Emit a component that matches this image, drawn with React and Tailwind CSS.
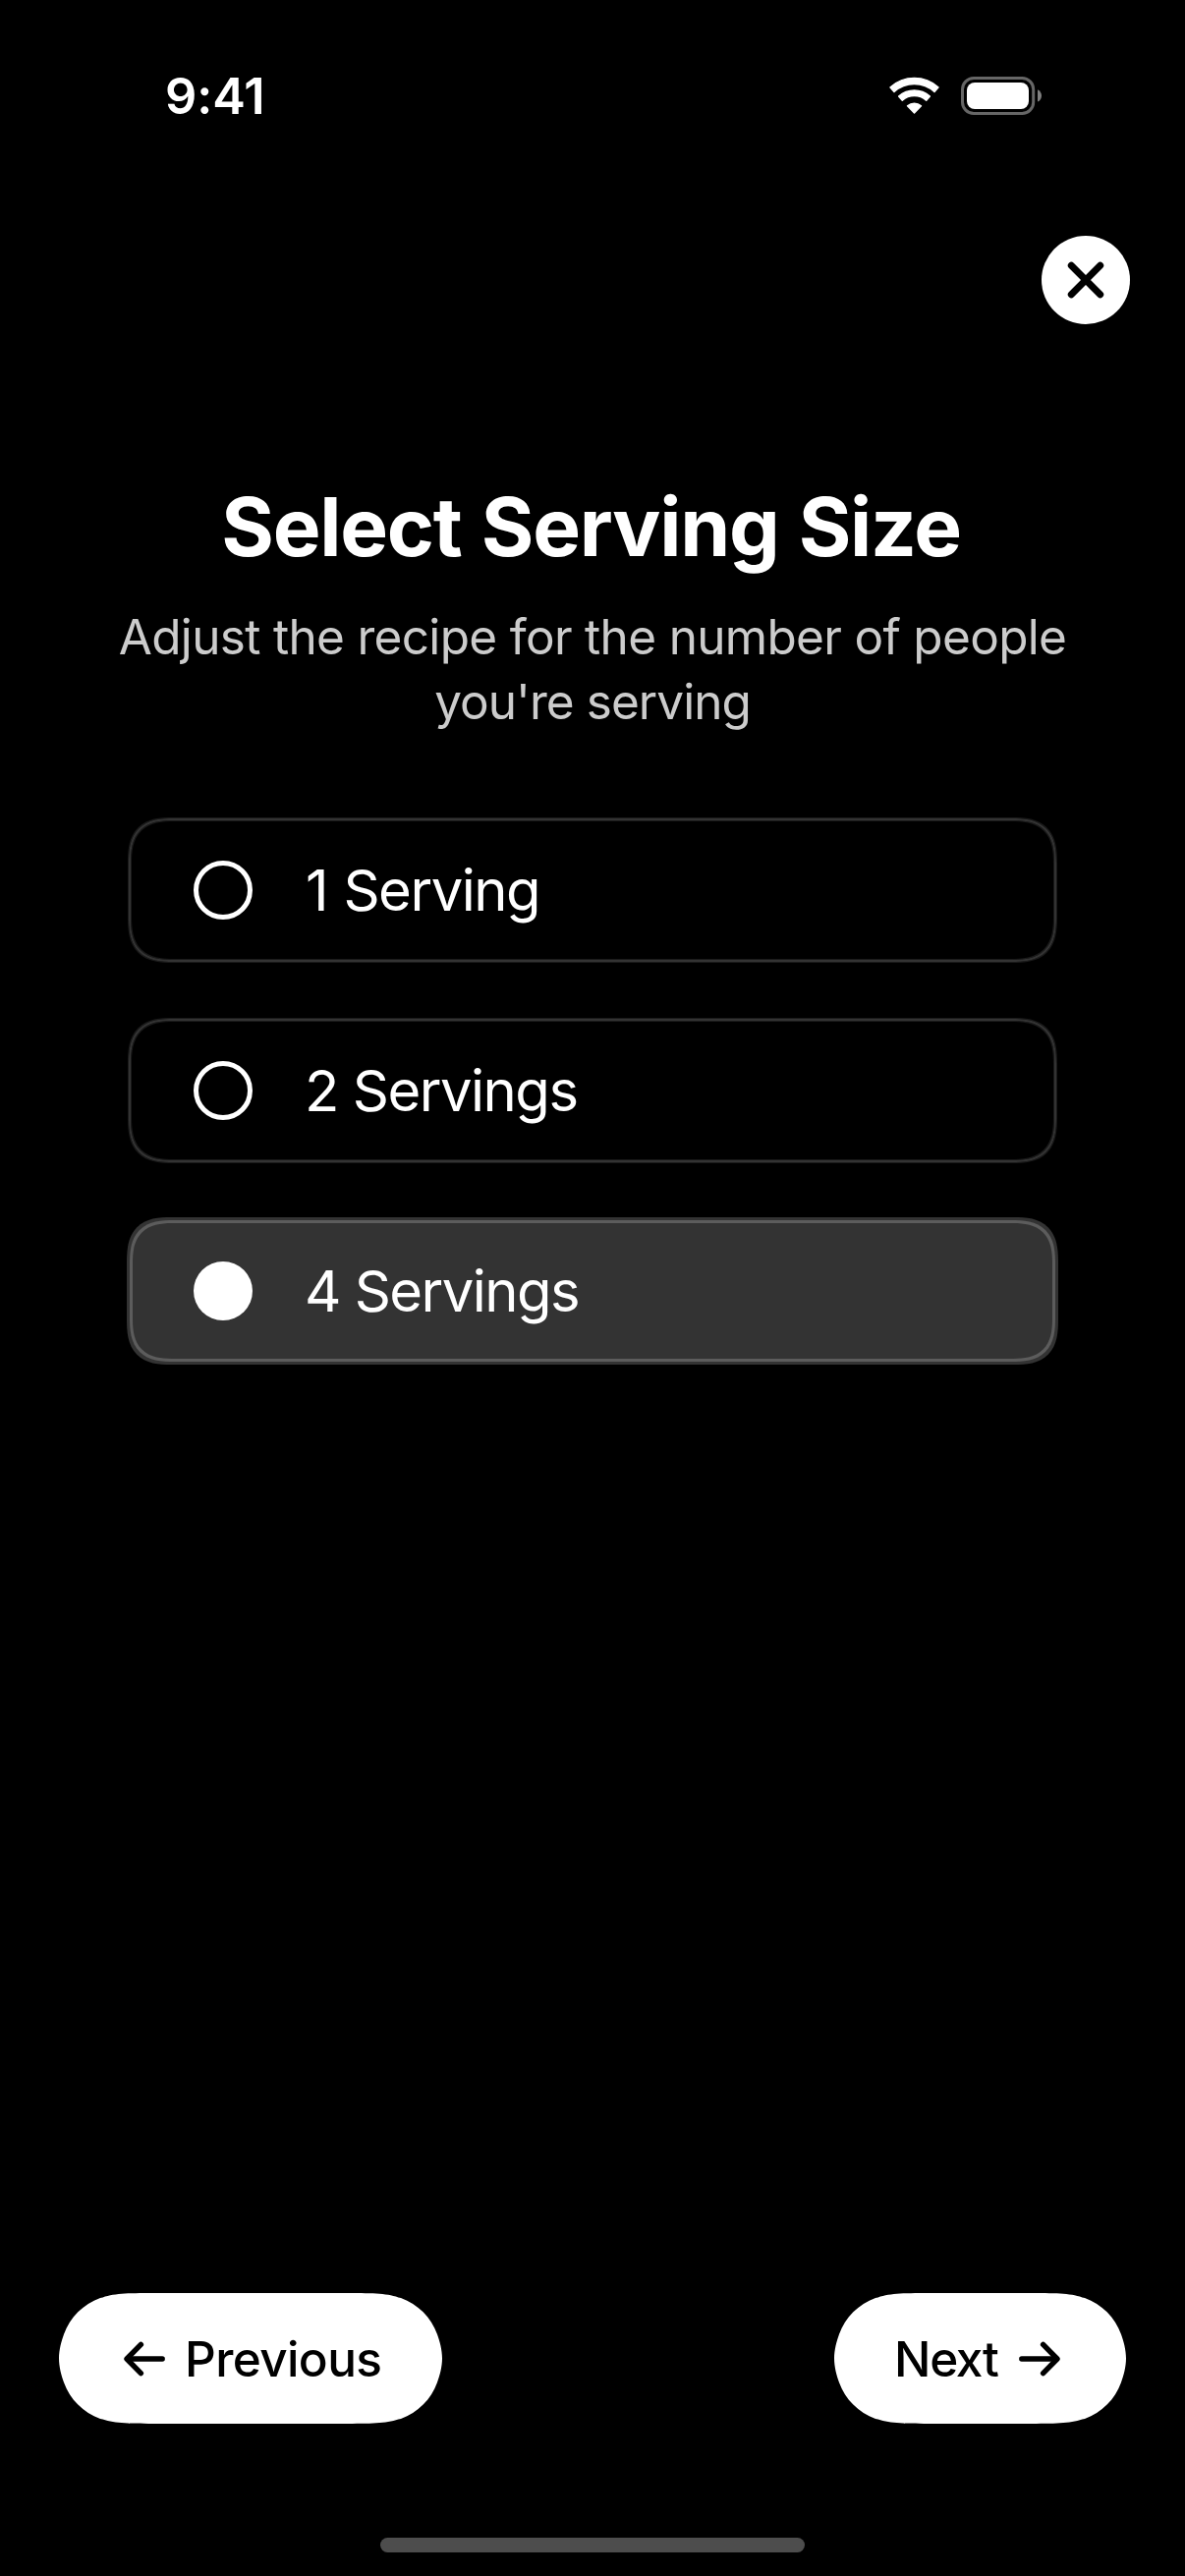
function WifiIcon() {
  return (
    <svg className="h-10 w-[54px]" viewBox="0 0 54 40" fill="white" stroke="white" strokeWidth="1.4" strokeLinejoin="round">
      <path d="M1.9 10.9A36.6 36.6 0 0 1 51.1 10.9L47 15.5A30.4 30.4 0 0 0 6 15.5Z" />
      <path d="M10.6 20A24 24 0 0 1 42.4 20L38.7 24.2A18.4 18.4 0 0 0 14.3 24.2Z" />
      <path d="M19.5 29.7A11 11 0 0 1 33.5 29.7L26.5 37Z" />
    </svg>
  );
}

function BatteryIcon() {
  return (
    <svg className="h-10 w-[83px]" viewBox="0 0 83 40" fill="none">
      <rect x="1.5" y="1.5" width="72.2" height="36" rx="11.5" stroke="#666666" strokeWidth="3" />
      <rect x="6" y="6" width="63" height="27" rx="8" fill="white" />
      <path d="M78 13.2C80.4 14.2 82 16.6 82 19.4C82 22.2 80.4 24.6 78 25.6Z" fill="#808080" />
    </svg>
  );
}

function ArrowIcon({ right = false }) {
  return (
    <svg
      className={right ? "h-9 w-[42px] shrink-0 rotate-180" : "h-9 w-[42px] shrink-0"}
      viewBox="0 0 42 36"
      fill="none"
      stroke="black"
      strokeWidth="5.4"
      strokeLinecap="round"
      strokeLinejoin="round"
    >
      <path d="M39.2 18H4" />
      <path d="M17.4 3.4L3 18L17.4 32.6" />
    </svg>
  );
}

const options = [
  { label: "1 Serving", tracking: "pl-px tracking-[-1.5px] [word-spacing:1.5px]" },
  { label: "2 Servings", tracking: "tracking-[-1.5px]" },
  { label: "4 Servings", tracking: "tracking-[-1.55px]", selected: true },
];

function Option({ label, tracking, selected }) {
  return (
    <button
      className={
        selected
          ? "m-px flex h-36 items-center gap-[53px] rounded-[45px] border-[3px] border-[#5c5c5c] bg-[#333333] pl-[62px] shadow-[0_0_0_3px_#333333] [corner-shape:superellipse(1.45)]"
          : "flex h-[146px] items-center gap-[53px] rounded-[46px] border-2 border-[#333333] pl-16 shadow-[0_0_0_1px_#1a1a1a,inset_0_0_0_1px_#1a1a1a] [corner-shape:superellipse(1.45)]"
      }
    >
      <span className={selected ? "size-[60px] rounded-full bg-white" : "size-[60px] rounded-full border-[5px] border-white"} />
      <span className={`text-[58px] leading-[70px] text-white ${tracking}`}>{label}</span>
    </button>
  );
}

export default function App() {
  return (
    <div className="flex h-[2622px] w-[1206px] flex-col bg-black pt-[68px] font-['Inter',sans-serif] text-white">
      <header className="flex h-[60px] items-center pr-[145px] pl-[168px]">
        <span className="text-[50.5px] leading-[60px] font-semibold tracking-[-0.1px]">9:41</span>
        <div className="ml-auto flex gap-5">
          <WifiIcon />
          <BatteryIcon />
        </div>
      </header>

      <div className="mt-28 flex justify-end pr-14">
        <button aria-label="Close" className="flex size-[90px] items-center justify-center rounded-full bg-white">
          <svg className="size-[38px]" viewBox="0 0 38 38" stroke="black" strokeWidth="7" strokeLinecap="round">
            <path d="M4.3 4.3L33.7 33.7M33.7 4.3L4.3 33.7" />
          </svg>
        </button>
      </div>

      <h1 className="mt-[157px] pr-[3px] text-center text-[82px] leading-[100px] font-bold tracking-[-1.25px] [word-spacing:2px]">
        Select Serving Size
      </h1>
      <p className="mt-7 text-center text-[49.5px] leading-[66px] text-[#cccccc]">
        <span className="block tracking-[-0.68px]">Adjust the recipe for the number of people</span>
        <span className="block tracking-[-0.95px]">you're serving</span>
      </p>

      <div className="mt-[86px] flex flex-col gap-[58px] px-[131px]">
        {options.map((option) => (
          <Option key={option.label} {...option} />
        ))}
      </div>

      <footer className="mt-auto flex justify-between px-[60px] text-[49.5px] leading-[60px] font-medium text-black">
        <button className="flex h-[133px] w-[390px] items-center gap-5 bg-white pl-[66px] [clip-path:path('M101.7_0C72.4_0_57.7_0_44.6_4.4L42_5C24.8_11.2_11.2_24.8_5_42C2.5_48.8_0_57.9_0_66.5C0_75.1_2.5_84.2_5_91C11.2_108.2_24.8_121.8_42_128L44.6_128.6C57.7_133_72.4_133_101.7_133L288.3_133C317.6_133_332.3_133_345.4_128.6L348_128C365.2_121.8_378.8_108.2_385_91C387.5_84.2_390_75.1_390_66.5C390_57.9_387.5_48.8_385_42C378.8_24.8_365.2_11.2_348_5L345.4_4.4C332.3_0_317.6_0_288.3_0Z')]">
          <ArrowIcon />
          <span className="pt-px tracking-[-0.63px]">Previous</span>
        </button>
        <button className="flex h-[133px] w-[297px] items-center justify-between bg-white pr-[67px] pl-[61px] [clip-path:path('M101.7_0C72.4_0_57.7_0_44.6_4.4L42_5C24.8_11.2_11.2_24.8_5_42C2.5_48.8_0_57.9_0_66.5C0_75.1_2.5_84.2_5_91C11.2_108.2_24.8_121.8_42_128L44.6_128.6C57.7_133_72.4_133_101.7_133L195.3_133C224.6_133_239.3_133_252.4_128.6L255_128C272.2_121.8_285.8_108.2_292_91C294.5_84.2_297_75.1_297_66.5C297_57.9_294.5_48.8_292_42C285.8_24.8_272.2_11.2_255_5L252.4_4.4C239.3_0_224.6_0_195.3_0Z')]">
          <span className="pt-px tracking-[-1.3px]">Next</span>
          <ArrowIcon right />
        </button>
      </footer>

      <div className="mt-[116px] mb-6 h-[15px] w-[432px] shrink-0 self-center rounded-full bg-[#4d4d4d]" />
    </div>
  );
}
